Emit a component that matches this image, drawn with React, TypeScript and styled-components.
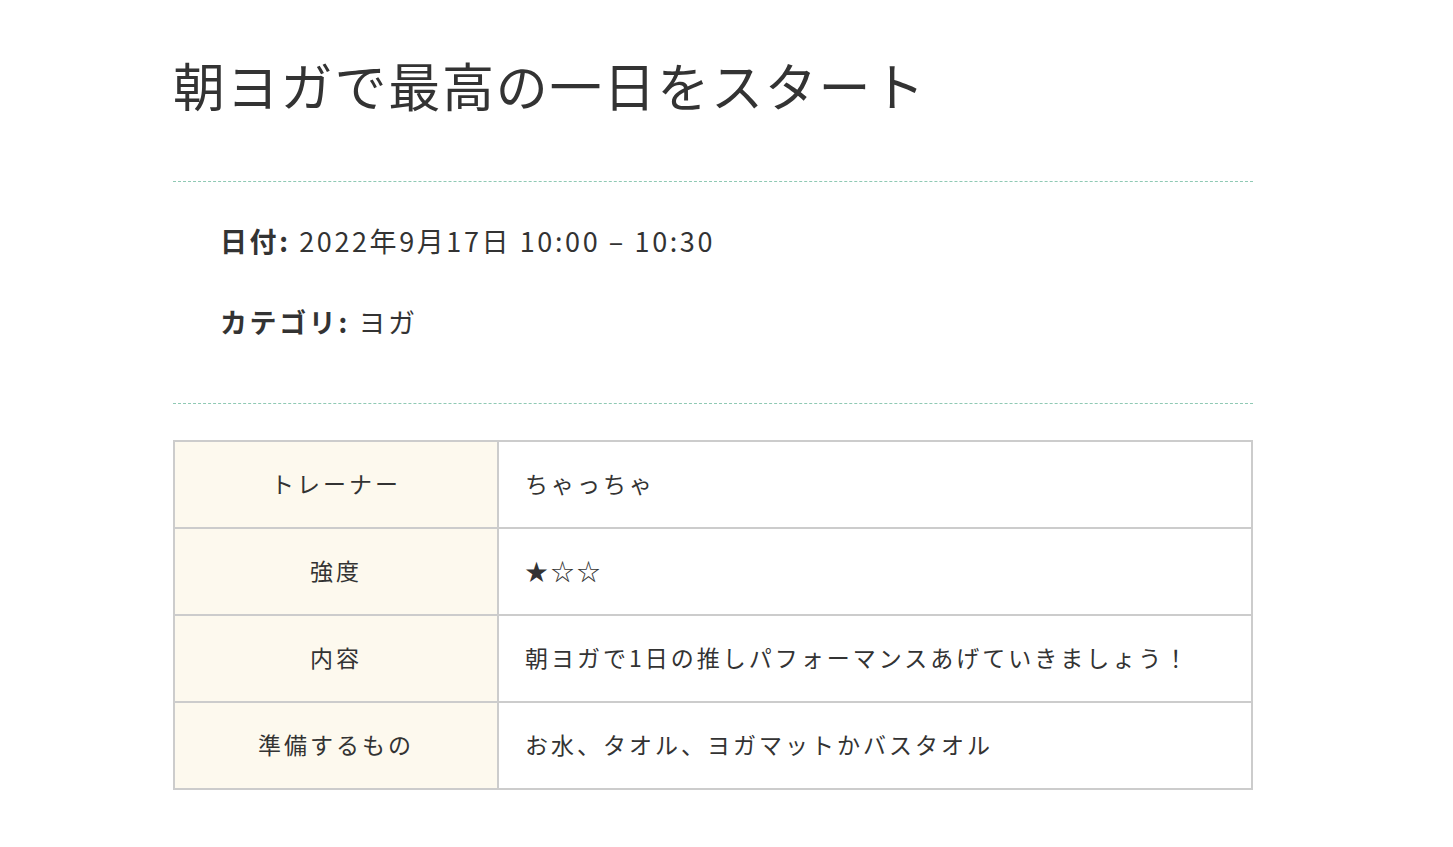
import React from "react";
import styled, { createGlobalStyle } from "styled-components";

const GlobalStyle = createGlobalStyle`
  html, body {
    margin: 0;
    padding: 0;
    background: #ffffff;
  }
  body {
    font-family: "Noto Sans CJK JP", "Noto Sans", sans-serif;
    color: #333333;
  }
`;

const Page = styled.main`
  width: 1080px;
  margin-left: 173px;
  padding-top: 46px;
`;

const Title = styled.h1`
  margin: 0;
  font-size: 52px;
  font-weight: 400;
  line-height: 78px;
  letter-spacing: 1.8px;
  color: #333333;
`;

const MetaSection = styled.section`
  margin-top: 57px;
  border-top: 1px dashed #8fc9b4;
  border-bottom: 1px dashed #8fc9b4;
  padding: 41px 0 63px 47px;
  display: flex;
  flex-direction: column;
  gap: 45px;
`;

const MetaRow = styled.p`
  margin: 0;
  font-size: 27px;
  line-height: 36px;
  letter-spacing: 2.6px;
`;

const MetaLabel = styled.strong`
  font-weight: 700;
`;

const Table = styled.table`
  margin-top: 36px;
  width: 100%;
  border-collapse: collapse;
  border: 2px solid #cccccc;
`;

const Row = styled.tr``;

const LabelCell = styled.th`
  width: 322px;
  height: 82px;
  padding: 0 0 3px;
  border: 2px solid #cccccc;
  background: #fdf9ee;
  font-size: 23px;
  font-weight: 400;
  letter-spacing: 3px;
  text-align: center;
  vertical-align: middle;
`;

const ValueCell = styled.td`
  height: 82px;
  padding: 0 26px 3px;
  border: 2px solid #cccccc;
  font-size: 23px;
  letter-spacing: 3px;
  vertical-align: middle;
`;

const rows: [string, string][] = [
  ["トレーナー", "ちゃっちゃ"],
  ["強度", "★☆☆"],
  ["内容", "朝ヨガで1日の推しパフォーマンスあげていきましょう！"],
  ["準備するもの", "お水、タオル、ヨガマットかバスタオル"],
];

export default function App() {
  return (
    <>
      <GlobalStyle />
      <Page>
        <Title>朝ヨガで最高の一日をスタート</Title>
        <MetaSection>
          <MetaRow>
            <MetaLabel>日付:</MetaLabel> 2022年9月17日 10:00 – 10:30
          </MetaRow>
          <MetaRow>
            <MetaLabel>カテゴリ:</MetaLabel> ヨガ
          </MetaRow>
        </MetaSection>
        <Table>
          <tbody>
            {rows.map(([label, value]) => (
              <Row key={label}>
                <LabelCell scope="row">{label}</LabelCell>
                <ValueCell>{value}</ValueCell>
              </Row>
            ))}
          </tbody>
        </Table>
      </Page>
    </>
  );
}
